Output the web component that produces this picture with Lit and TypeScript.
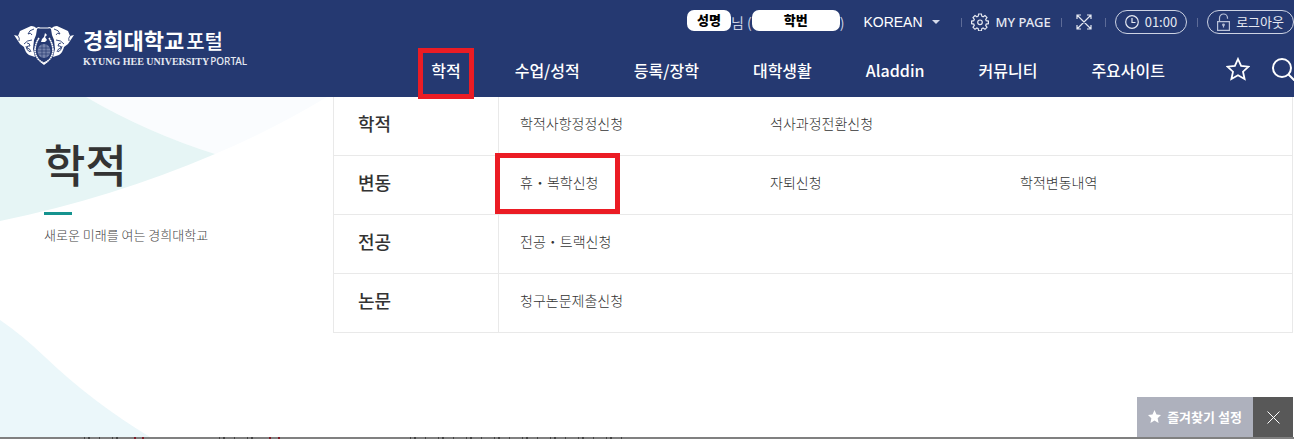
import { LitElement, html, svg, css } from "lit";
import { customElement } from "lit/decorators.js";

interface MenuLink {
  label: string;
  marked?: boolean;
}

interface MenuRow {
  title: string;
  links: MenuLink[];
}

const NAV: MenuLink[] = [
  { label: "학적", marked: true },
  { label: "수업/성적" },
  { label: "등록/장학" },
  { label: "대학생활" },
  { label: "Aladdin" },
  { label: "커뮤니티" },
  { label: "주요사이트" },
];

const ROWS: MenuRow[] = [
  { title: "학적", links: [{ label: "학적사항정정신청" }, { label: "석사과정전환신청" }] },
  {
    title: "변동",
    links: [{ label: "휴・복학신청", marked: true }, { label: "자퇴신청" }, { label: "학적변동내역" }],
  },
  { title: "전공", links: [{ label: "전공・트랙신청" }] },
  { title: "논문", links: [{ label: "청구논문제출신청" }] },
];

const wing = svg`
  <path fill="#fff" d="M0 9 L4 10 L6 5 L17 0 Q21 0 23 3 L22 9 L20 14 L19 23 L21 31 L15 29 Q11 26 10 21 L6 18 Z"/>
  <path fill="none" stroke="#253971" stroke-width=".9" d="M4 10 Q6 12 5 15 M20 3 Q15 4 14 8 Q17 6 18 9 M10 18 Q13 14 18 14 M13 17 q3 0 3 3 q-3 -1 -3 2 q3 0 4 4 M12 20 q0 4 4 6"/>`;

const emblem = svg`
  <svg class="emblem" viewBox="0 0 60 40" aria-hidden="true">
    <g>${wing}</g>
    <g transform="translate(60 0) scale(-1 1)">${wing}</g>
    <path fill="none" stroke="#fff" stroke-width="1.2" d="M22 3 Q24 1 26 2 H34 Q36 1 38 3"/>
    <path fill="#253971" d="M30 5 Q20 12 20 24 Q21 35 30 39 Q39 35 40 24 Q40 12 30 5Z"/>
    <path fill="none" stroke="#fff" stroke-width="1.6" stroke-dasharray="1.8 .4" d="M25 12 Q21 18 21 25 Q22 34 30 37 Q38 34 39 25 Q39 18 35 12"/>
    <ellipse cx="30" cy="25" rx="6.500" ry="7" fill="#7583ab"/>
    <path fill="none" stroke="#253971" stroke-width=".7" d="M24 22h12M23 25h14M24 28h12M28 18v14M32 18v14"/>
    <path fill="#fff" d="M31 7 l2 2 -2 2 2 3 -2 2 h-4 l1 -3 2 -2Z"/>
    <path fill="#fff" d="M25 35 L30 39 L35 35 L30 37Z"/>
  </svg>`;

const gear = svg`
  <svg class="icon gear" viewBox="0 0 18 18" aria-hidden="true">
    <path d="M7.6 1h2.8l.4 2.2 1.3.6 1.9-1.3 2 2-1.3 1.9.5 1.3 2.2.4v2.6l-2.2.4-.5 1.3 1.3 1.9-2 2-1.9-1.3-1.3.6-.4 2.2H7.6l-.4-2.2-1.3-.6L4 16.3l-2-2 1.3-1.9-.5-1.3L.6 10.700V8.100l2.200-.4.5-1.300L2 4.500l2-2 1.900 1.300 1.300-.6z"/>
    <circle cx="9" cy="9.300" r="2.300"/>
  </svg>`;

const expand = svg`
  <svg class="icon expand" viewBox="0 0 16 16" aria-hidden="true">
    <path d="M1 1l14 14M15 1L1 15M1 5V1h4M11 1h4v4M15 11v4h-4M5 15H1v-4"/>
  </svg>`;

const clock = svg`
  <svg class="icon clock" viewBox="0 0 14 14" aria-hidden="true">
    <circle cx="7" cy="7" r="6.300"/><path d="M7 3v4.500h3.500"/>
  </svg>`;

const lock = svg`
  <svg class="icon lock" viewBox="0 0 13 18" aria-hidden="true">
    <path d="M.6 8.600h11.800v8.800H.6zM2.500 8.500V5a4 4 0 0 1 8 0v.8M6.500 11.500v3"/>
    <circle cx="6.500" cy="11.800" r=".8"/>
  </svg>`;

@customElement("app-root")
export class AppRoot extends LitElement {
  static styles = css`
    :host {
      display: flex;
      flex-direction: column;
      min-height: 100vh;
      box-sizing: border-box;
      position: relative;
      overflow: hidden;
      background: #fff;
      color: #333;
      font-family: "Noto Sans CJK KR", "Noto Sans", sans-serif;
    }
    a { color: inherit; text-decoration: none; }
    button { font: inherit; color: inherit; border: 0; padding: 0; background: none; cursor: pointer; }
    ul { list-style: none; margin: 0; padding: 0; }
    h1, h2, p { margin: 0; }

    .header {
      position: relative;
      z-index: 1;
      display: flex;
      justify-content: space-between;
      height: 97px;
      background: #253971;
      color: #fff;
      white-space: nowrap;
    }
    .brand { display: flex; align-items: flex-start; gap: 9px; padding: 26px 0 0 14px; }
    .emblem { width: 60px; height: 40px; }
    .brand-text { display: flex; flex-direction: column; }
    .brand-ko { display: flex; align-items: baseline; gap: 2px; font-size: 22px; line-height: 26px; font-weight: 700; }
    .brand-ko span { font-size: 20px; font-weight: 500; }
    .brand-en { display: flex; align-items: baseline; gap: 1px; font: 700 10px/14px "Liberation Serif", serif; color: #e6e9f2; }
    .brand-en span { font: 500 10px/14px "Noto Sans", sans-serif; }

    .tools { display: flex; flex-direction: column; }
    .utility {
      display: flex;
      align-items: center;
      justify-content: flex-end;
      height: 44px;
      font-size: 13px;
      color: #e6e9f2;
    }
    .user { display: flex; align-items: center; margin-right: 19px; font-size: 14px; line-height: 20px; color: #cdd3e3; }
    .chip {
      display: flex;
      align-items: center;
      justify-content: center;
      height: 21px;
      margin-bottom: 4px;
      border-radius: 7px;
      background: #fff;
      color: #000;
      font-size: 13px;
      font-weight: 900;
    }
    .chip.name { width: 44px; }
    .chip.number { width: 88px; }
    .language { display: flex; align-items: center; gap: 9px; font: 14px/20px "Liberation Sans", sans-serif; color: #fff; }
    .caret { border: 4px solid transparent; border-top-color: #d5daea; border-bottom: 0; }
    .divider { width: 1px; height: 9px; background: #5d6b97; }
    .mypage { display: flex; align-items: center; gap: 7px; margin: 0 10px 0 9px; }
    .mypage span { font: 500 13px/20px "Noto Sans", sans-serif; }
    .language + .divider { margin-left: 21px; }
    .full { display: flex; margin: 0 13px 0 14px; }
    .pill {
      display: flex;
      align-items: center;
      justify-content: center;
      gap: 6px;
      box-sizing: border-box;
      height: 24px;
      margin: 0 10px 0 9px;
      padding: 0 9px;
      border: 1px solid #cdd3e3;
      border-radius: 12px;
      line-height: 20px;
    }
    .pill.logout { margin-right: 0; }
    .icon { display: block; fill: none; stroke: #e6e9f2; stroke-width: 1.2; }
    .gear { width: 18px; height: 18px; }
    .expand { width: 16px; height: 16px; }
    .clock { width: 14px; height: 14px; }
    .lock { width: 13px; height: 18px; stroke: #b9c1d8; }

    .main-nav { display: flex; align-items: center; height: 51px; }
    .nav-list { display: flex; gap: 54px; margin-right: 61px; font-size: 16px; line-height: 24px; font-weight: 500; }
    .nav-list a, .links a { position: relative; display: block; }
    .marked::after { content: ""; position: absolute; border: 5px solid #eb1c24; pointer-events: none; }
    .nav-list .marked::after { inset: -10px -13px -17px; }
    .links .marked::after { inset: -17px -22px -20px -25px; }
    .star { width: 24px; height: 24px; fill: none; stroke: #fff; stroke-width: 1.800; display: block; }
    .search { width: 24px; height: 24px; fill: none; stroke: #fff; stroke-width: 2; display: block; }
    .nav-icons { display: flex; gap: 21px; margin: 0 -1px 2px 0; }

    .content { position: relative; display: grid; grid-template-columns: 333px 1fr; flex: 1; align-items: start; padding-right: 1px; }
    .backdrop { position: absolute; top: 0; left: 0; width: 333px; height: 340px; }
    .intro { position: relative; padding: 35px 0 0 44px; }
    .intro h1 { font-size: 45px; line-height: 64px; font-weight: 500; }
    .accent { width: 28px; height: 3px; margin: 16px 0 10px; background: #15938f; }
    .intro p { font-size: 13px; line-height: 20px; font-weight: 300; color: #444; }

    .menu { border: 1px solid #e9e9e9; border-top: 0; background: #fff; }
    .row { display: grid; grid-template-columns: 165px 1fr; height: 58px; }
    .row + .row { border-top: 1px solid #e9e9e9; }
    .row h2 { padding-left: 24px; font-size: 18px; line-height: 52px; font-weight: 500; border-right: 1px solid #e9e9e9; }
    .links { display: grid; grid-template-columns: repeat(3, 250px); justify-items: start; padding-left: 21px; font-size: 14px; line-height: 24px; font-weight: 300; color: #333; }
    .links li { padding-top: 14px; }

    .dock { position: absolute; right: 1px; bottom: 2px; display: flex; height: 40px; color: #fff; }
    .favorite { display: flex; align-items: center; justify-content: center; gap: 6px; width: 116px; padding-bottom: 2px; background: #aeb1bd; font-size: 13px; font-weight: 700; }
    .favorite svg { width: 13px; height: 13px; fill: #fff; }
    .close { display: grid; place-items: center; width: 40px; background: #585858; }
    .close svg { width: 13px; height: 13px; fill: none; stroke: #fff; }
    .edge { display: block; width: 100%; height: 2px; background: #808080; }
  `;

  render() {
    return html`
      <header class="header">
        <a class="brand" href="#">
          ${emblem}
          <div class="brand-text">
            <div class="brand-ko">경희대학교<span>포털</span></div>
            <div class="brand-en">KYUNG HEE UNIVERSITY<span>PORTAL</span></div>
          </div>
        </a>
        <div class="tools">
          <div class="utility">
            <div class="user">
              <span class="chip name">성명</span><span>님 (</span><span class="chip number">학번</span><span>)</span>
            </div>
            <button class="language">KOREAN<i class="caret"></i></button>
            <i class="divider"></i>
            <a class="mypage" href="#">${gear}<span>MY PAGE</span></a>
            <i class="divider"></i>
            <button class="full" aria-label="전체화면">${expand}</button>
            <i class="divider"></i>
            <button class="pill">${clock}01:00</button>
            <i class="divider"></i>
            <button class="pill logout">${lock}로그아웃</button>
          </div>
          <nav class="main-nav">
            <ul class="nav-list">
              ${NAV.map((n) => html`<li><a class=${n.marked ? "marked" : ""} href="#">${n.label}</a></li>`)}
            </ul>
            <div class="nav-icons">
              <button aria-label="즐겨찾기">
                <svg class="star" viewBox="0 0 24 24">
                  <path d="M12 2l3.100 6.900 7.400.8-5.500 5 1.600 7.300L12 18.300 5.400 22 7 14.700l-5.500-5 7.400-.8z" />
                </svg>
              </button>
              <button aria-label="검색">
                <svg class="search" viewBox="0 0 24 24"><circle cx="11" cy="11" r="9" /><path d="M17.500 17.500l6 6" /></svg>
              </button>
            </div>
          </nav>
        </div>
      </header>
      <main class="content">
        <svg class="backdrop" viewBox="0 0 333 340" aria-hidden="true">
          <path fill="#fafcfe" d="M86 0H327Q272 33 215 57Q148 36 86 0Z" />
          <path fill="#e6f5f5" d="M0 0H86Q148 36 215 57Q112 101 0 124Z" />
          <path fill="#ebf7fa" d="M0 223Q22 238 45 260Q92 305 150 340H0Z" />
        </svg>
        <section class="intro">
          <h1>학적</h1>
          <div class="accent"></div>
          <p>새로운 미래를 여는 경희대학교</p>
        </section>
        <nav class="menu">
          ${ROWS.map(
            (r) => html`<section class="row">
              <h2>${r.title}</h2>
              <ul class="links">
                ${r.links.map((l) => html`<li><a class=${l.marked ? "marked" : ""} href="#">${l.label}</a></li>`)}
              </ul>
            </section>`
          )}
        </nav>
      </main>
      <svg class="edge" aria-hidden="true">
        <path fill="none" stroke="#444" stroke-width="2" stroke-dasharray="1 3 2 9 1 12" d="M84 1H124M219 1H262M410 1H624" />
        <path fill="none" stroke="#7c1d28" stroke-width="2" d="M134 1h2M142 1h2M269 1h2M278 1h2" />
      </svg>
      <div class="dock">
        <button class="favorite">
          <svg viewBox="0 0 24 24" aria-hidden="true"><path d="M12 0l3.700 8.200 8.300 1-6.200 6 1.700 8.800L12 19.500 4.500 24l1.700-8.800L0 9.200l8.300-1z" /></svg>
          즐겨찾기 설정
        </button>
        <button class="close" aria-label="닫기">
          <svg viewBox="0 0 13 13" aria-hidden="true"><path d="M.5.5l12 12M12.500.5l-12 12" /></svg>
        </button>
      </div>
    `;
  }
}
